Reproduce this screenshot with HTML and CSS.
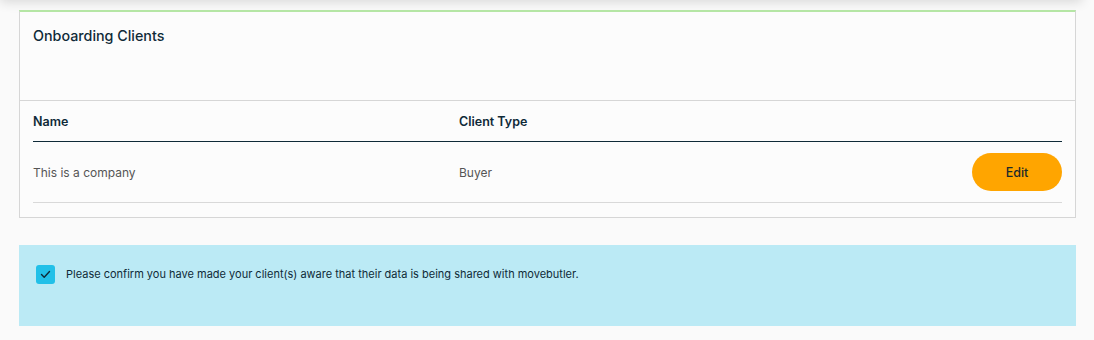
FILE: index.html
```html
<!DOCTYPE html>
<html lang="en">
<head>
    <meta charset="UTF-8">
    <title>Onboarding Clients</title>
    <link rel="stylesheet" href="styles.css">
</head>
<body>
    <div class="top-panel"></div>

    <div class="page">
        <div class="card">
            <div class="card-header">
                <h2>Onboarding Clients</h2>
            </div>
            <div class="card-body">
                <div class="table-row table-head">
                    <span class="col-name">Name</span>
                    <span class="col-type">Client Type</span>
                    <span class="col-action"></span>
                </div>
                <div class="table-row">
                    <span class="col-name">This is a company</span>
                    <span class="col-type">Buyer</span>
                    <span class="col-action"><button class="edit-btn">Edit</button></span>
                </div>
            </div>
        </div>

        <label class="consent">
            <span class="checkbox">
                <svg width="11" height="9" viewBox="0 0 11 9"><path d="M1.5 4.6 L4.2 7.2 L9.5 1.6" fill="none" stroke="#0f2a38" stroke-width="1.4" stroke-linecap="round" stroke-linejoin="round"/></svg>
            </span>
            <span class="consent-text">Please confirm you have made your client(s) aware that their data is being shared with movebutler.</span>
        </label>
    </div>
</body>
</html>
```

FILE: styles.css
```css
* {
    margin: 0;
    padding: 0;
    box-sizing: border-box;
}

body {
    font-family: Inter, "Noto Sans", sans-serif;
    background: #fafafa;
    color: #0f2a38;
    overflow: hidden;
}

.top-panel {
    height: 20px;
    margin-top: -20px;
    margin-right: 12px;
    background: #fff;
    box-shadow: 0 2px 12px rgba(0, 0, 0, 0.14);
}

.page {
    padding: 10px 18px 0 19px;
}

.card {
    background: #fcfcfc;
    border: 1px solid #d6d6d6;
    border-top: 2px solid #b5e6a5;
}

.card-header {
    height: 89px;
    padding: 15px 13px 0;
    border-bottom: 1px solid #d6d6d6;
}

.card-header h2 {
    font-size: 14.3px;
    font-weight: 500;
    color: #0f2a38;
}

.card-body {
    padding: 0 13px 14px 13px;
}

.table-row {
    display: grid;
    grid-template-columns: 426px 1fr 90px;
    align-items: center;
    height: 61px;
    border-bottom: 1px solid #d9d9d9;
    font-size: 12px;
    color: #555;
}

.table-row.table-head {
    height: 41px;
    border-bottom: 1px solid #0f2a38;
    font-size: 12.5px;
    font-weight: 600;
    color: #0f2a38;
}

.edit-btn {
    width: 90px;
    height: 38px;
    border: none;
    border-radius: 19px;
    background: #ffa500;
    font-family: inherit;
    font-size: 12.5px;
    font-weight: 500;
    color: #1d2a2a;
    cursor: pointer;
}

.consent {
    display: flex;
    align-items: flex-start;
    gap: 11px;
    height: 81px;
    margin-top: 27px;
    padding: 20px 17px;
    background: #bbeaf5;
}

.checkbox {
    display: flex;
    align-items: center;
    justify-content: center;
    width: 19px;
    height: 19px;
    flex-shrink: 0;
    border-radius: 3px;
    background: #22c0e8;
}

.consent-text {
    font-size: 11px;
    line-height: 19px;
    color: #0f2a38;
}
```
